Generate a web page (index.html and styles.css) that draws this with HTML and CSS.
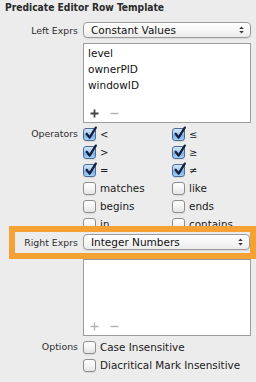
FILE: index.html
```html
<!DOCTYPE html>
<html>
<head>
<meta charset="utf-8">
<link rel="stylesheet" href="styles.css">
</head>
<body>
<div class="panel">
  <div class="title">Predicate Editor Row Template</div>

  <div class="row">
    <span class="lbl">Left Exprs</span>
    <div class="popup"><span class="ptext">Constant Values</span>
      <svg class="arrows" viewBox="0 0 7 10" width="7" height="10"><path d="M3.5 1.5 L1.2 4 L5.8 4 Z M1.2 6 L5.8 6 L3.5 8.5 Z"/></svg>
    </div>
  </div>

  <div class="row listrow">
    <span></span>
    <div class="list">
      <div class="item">level</div>
      <div class="item">ownerPID</div>
      <div class="item">windowID</div>
      <div class="pm">
        <svg width="9" height="9" viewBox="0 0 9 9" class="plus on"><path d="M4.5 0.5 V8.5 M0.5 4.5 H8.5"/></svg>
        <svg width="9" height="9" viewBox="0 0 9 9" class="minus"><path d="M0.5 4.5 H8.5"/></svg>
      </div>
    </div>
  </div>

  <div class="row opsrow">
    <span class="lbl lbltop">Operators</span>
    <div class="opgrid">
      <div class="opt"><span class="cb on"><svg class="chk" viewBox="0 0 16 16" width="16" height="16"><path d="M3.6 7.8 L6.6 11.6 L12.8 1.6"/></svg></span><span class="sym">&lt;</span></div>
      <div class="opt"><span class="cb on"><svg class="chk" viewBox="0 0 16 16" width="16" height="16"><path d="M3.6 7.8 L6.6 11.6 L12.8 1.6"/></svg></span><span class="sym">≤</span></div>
      <div class="opt"><span class="cb on"><svg class="chk" viewBox="0 0 16 16" width="16" height="16"><path d="M3.6 7.8 L6.6 11.6 L12.8 1.6"/></svg></span><span class="sym">&gt;</span></div>
      <div class="opt"><span class="cb on"><svg class="chk" viewBox="0 0 16 16" width="16" height="16"><path d="M3.6 7.8 L6.6 11.6 L12.8 1.6"/></svg></span><span class="sym">≥</span></div>
      <div class="opt"><span class="cb on"><svg class="chk" viewBox="0 0 16 16" width="16" height="16"><path d="M3.6 7.8 L6.6 11.6 L12.8 1.6"/></svg></span><span class="sym">=</span></div>
      <div class="opt"><span class="cb on"><svg class="chk" viewBox="0 0 16 16" width="16" height="16"><path d="M3.6 7.8 L6.6 11.6 L12.8 1.6"/></svg></span><span class="sym">≠</span></div>
      <div class="opt"><span class="cb"></span><span>matches</span></div>
      <div class="opt"><span class="cb"></span><span>like</span></div>
      <div class="opt"><span class="cb"></span><span>begins</span></div>
      <div class="opt"><span class="cb"></span><span>ends</span></div>
      <div class="opt"><span class="cb"></span><span>in</span></div>
      <div class="opt"><span class="cb"></span><span>contains</span></div>
    </div>
  </div>

  <div class="highlight">
    <div class="hrow">
      <span class="lbl">Right Exprs</span>
      <div class="popup"><span class="ptext">Integer Numbers</span>
        <svg class="arrows" viewBox="0 0 7 10" width="7" height="10"><path d="M3.5 1.5 L1.2 4 L5.8 4 Z M1.2 6 L5.8 6 L3.5 8.5 Z"/></svg>
      </div>
    </div>
  </div>

  <div class="row listrow2">
    <span></span>
    <div class="list list2">
      <div class="pm">
        <svg width="9" height="9" viewBox="0 0 9 9" class="plus"><path d="M4.5 0.5 V8.5 M0.5 4.5 H8.5"/></svg>
        <svg width="9" height="9" viewBox="0 0 9 9" class="minus"><path d="M0.5 4.5 H8.5"/></svg>
      </div>
    </div>
  </div>

  <div class="row optsrow">
    <span class="lbl lbltop">Options</span>
    <div class="optlist">
      <div class="opt"><span class="cb"></span><span>Case Insensitive</span></div>
      <div class="opt"><span class="cb"></span><span>Diacritical Mark Insensitive</span></div>
    </div>
  </div>
</div>
</body>
</html>
```

FILE: styles.css
```css
html, body {
  margin: 0;
  padding: 0;
  background: #ececec;
  overflow: hidden;
}
.panel {
  width: 256px;
  height: 382px;
  font-family: "DejaVu Sans", "Liberation Sans", sans-serif;
  font-size: 10.4px;
  color: #262626;
}
.title {
  font-family: "DejaVu Sans Condensed", "DejaVu Sans", sans-serif;
  font-stretch: condensed;
  font-weight: bold;
  font-size: 10.2px;
  line-height: 14px;
  padding: 1px 0 0 5px;
  margin-bottom: 7px;
  color: #2a2a2a;
}
.row {
  display: grid;
  grid-template-columns: 78px 168px;
  column-gap: 5px;
  align-items: center;
}
.lbl {
  text-align: right;
  white-space: nowrap;
  color: #2e2e2e;
  font-size: 9.4px;
}
.lbltop {
  align-self: start;
  line-height: 18px;
}
.popup {
  height: 16px;
  box-sizing: border-box;
  border: 1px solid #9b9b9b;
  border-radius: 4px;
  background: linear-gradient(#ffffff, #f7f7f7 50%, #ebebeb);
  box-shadow: 0 1px 1px rgba(0, 0, 0, 0.08);
  display: flex;
  align-items: center;
  justify-content: space-between;
  padding: 0 5px 0 7px;
  font-size: 10.5px;
  color: #111;
}
.arrows {
  fill: #3a3a3a;
}
.listrow {
  margin-top: 5px;
}
.list {
  height: 80px;
  box-sizing: border-box;
  border: 1px solid #9c9c9c;
  background: #fff;
  padding: 1px 0 0 4px;
  display: flex;
  flex-direction: column;
  font-size: 10.5px;
  color: #111;
}
.item {
  line-height: 16px;
}
.pm {
  margin-top: auto;
  display: flex;
  gap: 11px;
  padding: 0 0 4px 2px;
}
.pm svg {
  stroke: #b4b4b4;
  stroke-width: 1.4;
  fill: none;
}
.pm svg.on {
  stroke: #444;
  stroke-width: 1.8;
}
.opsrow {
  margin-top: 2px;
}
.opgrid {
  display: grid;
  grid-template-columns: 89px 79px;
  grid-auto-rows: 18px;
}
.opt {
  display: flex;
  align-items: center;
  gap: 4px;
  height: 18px;
  white-space: nowrap;
  color: #1a1a1a;
}
.sym {
  font-size: 10px;
}
.cb {
  position: relative;
  width: 13px;
  height: 13px;
  box-sizing: border-box;
  border: 1px solid #8e8e8e;
  border-radius: 3px;
  background: linear-gradient(#ffffff, #f4f4f4 50%, #e4e4e4);
  box-shadow: 0 1px 1px rgba(0, 0, 0, 0.08);
  flex: none;
}
.cb.on {
  border-color: #4c6c98;
  background: linear-gradient(#d2e6fa, #a9cdf2 45%, #78aee6 55%, #a6d0f6);
}
.chk {
  position: absolute;
  left: -1px;
  top: -3px;
  overflow: visible;
  fill: none;
  stroke: #16203a;
  stroke-width: 2.3;
  stroke-linecap: round;
  stroke-linejoin: round;
}
.highlight {
  position: relative;
  z-index: 1;
  margin: -7px 0 0 9px;
  border: 6px solid #f6a133;
  background: #ececec;
  padding: 2px 0 3px 0;
}
.hrow {
  display: grid;
  grid-template-columns: 63px 167px;
  column-gap: 5px;
  align-items: center;
}
.list2 {
  height: 77px;
}
.optsrow {
  margin-top: 2px;
}
.optlist {
  display: flex;
  flex-direction: column;
}
```
